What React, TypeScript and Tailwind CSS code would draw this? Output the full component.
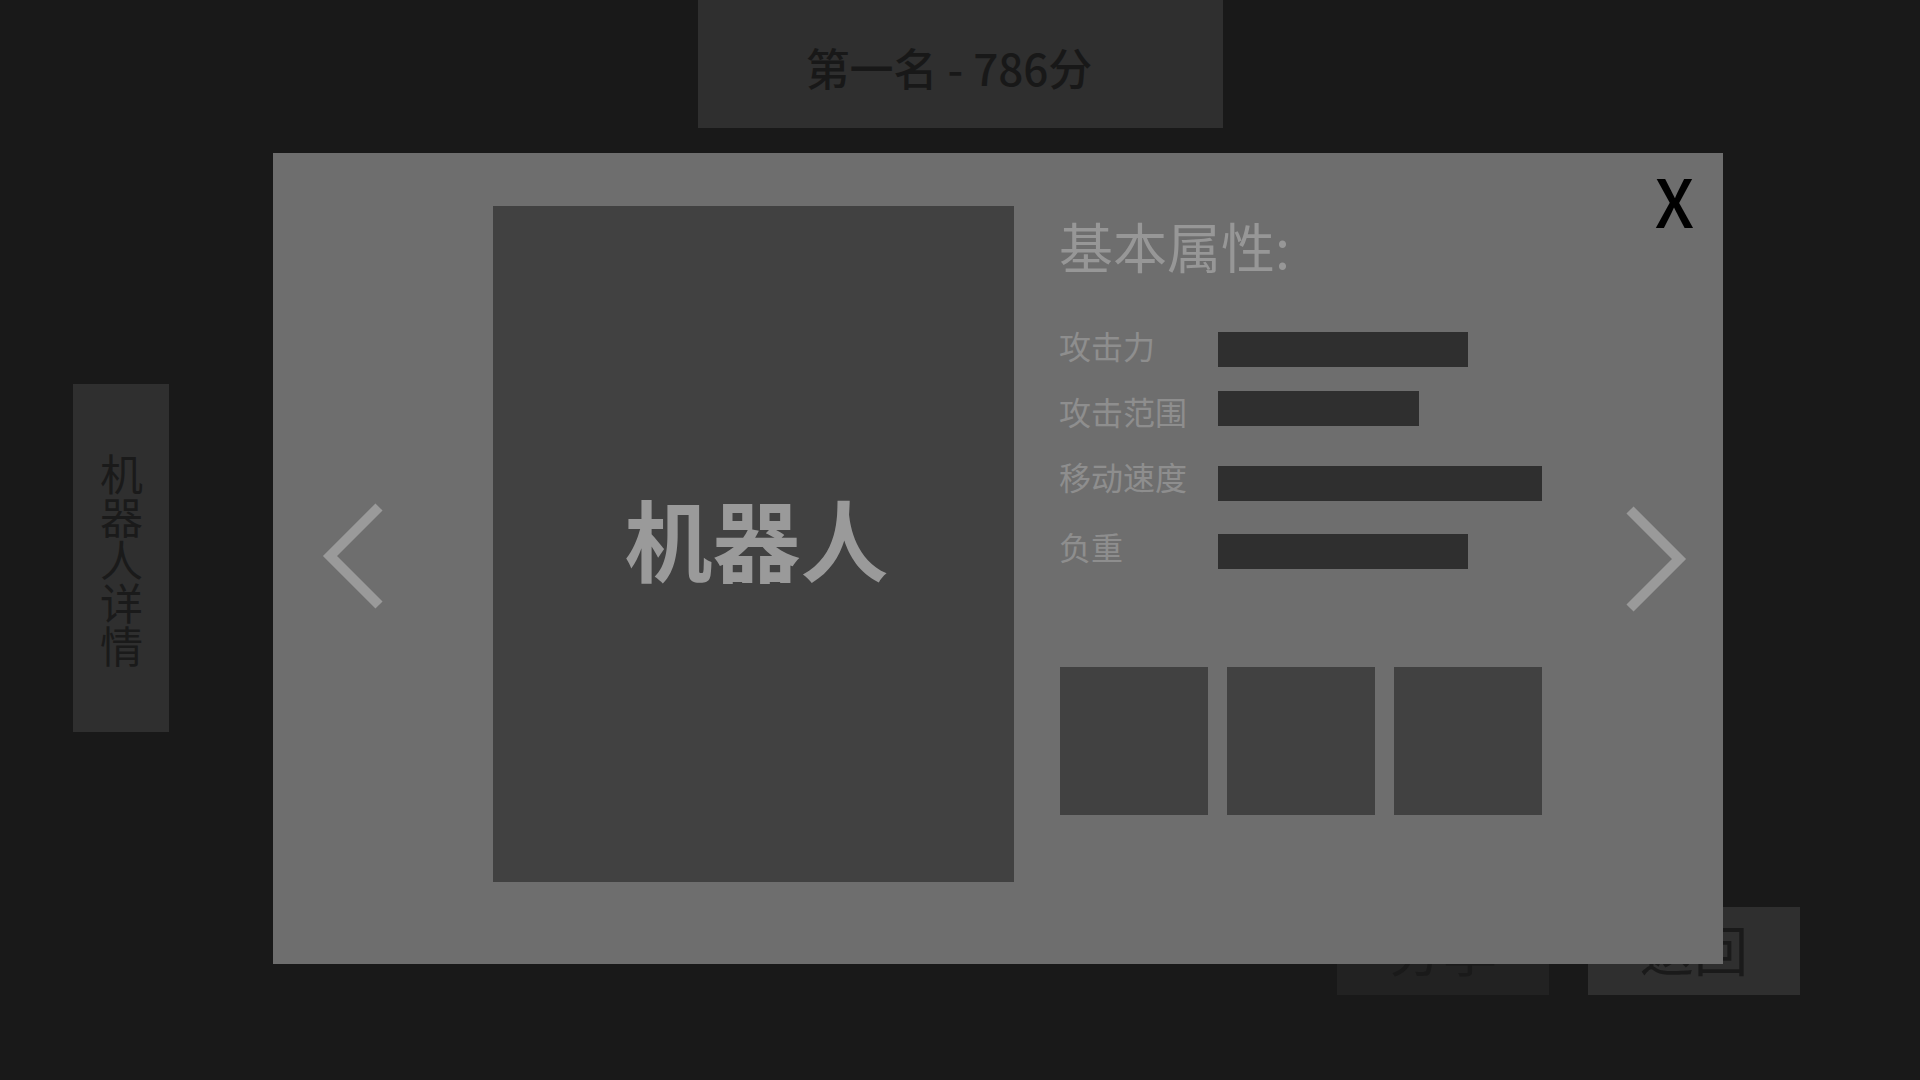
import React from 'react';

const stats = [
  { label: '攻击力', bar: 'w-[250px]', gap: 'mt-[56px]', shift: '-translate-y-[5px]' },
  { label: '攻击范围', bar: 'w-[201px]', gap: 'mt-[24px]', shift: 'translate-y-[2px]' },
  { label: '移动速度', bar: 'w-[324px]', gap: 'mt-[40px]', shift: '-translate-y-[8px]' },
  { label: '负重', bar: 'w-[250px]', gap: 'mt-[33px]', shift: '-translate-y-[6px]' },
];

export default function App() {
  return (
    <div className="relative w-[1920px] h-[1080px] overflow-hidden bg-[#191919] font-['Noto_Sans_CJK_SC','Noto_Sans',sans-serif]">
      {/* Rank banner */}
      <div className="mx-auto w-[525px] h-[128px] bg-[#2f2f2f] flex items-center justify-center pt-[6px] pr-[22px] text-[44px] leading-none font-medium text-[#181818]">
        第一名 - 786分
      </div>

      {/* Side tab */}
      <div className="ml-[73px] mt-[256px] w-[96px] h-[348px] bg-[#2f2f2f] flex items-center justify-center pt-[4px]">
        <span className="[writing-mode:vertical-rl] text-[43px] leading-none text-[#1a1a1a]">机器人详情</span>
      </div>

      {/* Bottom buttons */}
      <div className="mt-[175px] flex justify-end gap-[39px] pr-[120px]">
        <button className="w-[212px] h-[88px] bg-[#222222] text-[54px] leading-none text-[#1a1a1a] pb-[4px]">分享</button>
        <button className="w-[212px] h-[88px] bg-[#2f2f2f] text-[54px] leading-none text-[#1a1a1a] pb-[4px]">返回</button>
      </div>

      {/* Robot detail modal */}
      <div className="absolute left-[273px] top-[153px] w-[1450px] h-[811px] bg-[#6e6e6e] flex">
        <button className="w-[220px] h-full flex items-center pl-[48px] pb-[5px]">
          <svg width="62" height="106" viewBox="0 0 62 106" fill="none">
            <path d="M58 4 L9 53 L58 102" stroke="#9a9a9a" strokeWidth="10" strokeLinejoin="miter" />
          </svg>
        </button>

        <div className="mt-[53px] w-[521px] h-[676px] bg-[#414141] flex items-center justify-center">
          <span className="text-[88px] leading-none font-bold text-[#9a9a9a] pl-[6px] pb-[14px]">机器人</span>
        </div>

        <div className="ml-[45px] pt-[69px] flex flex-col">
          <h2 className="text-[54px] leading-none h-[54px] text-[#979797] -translate-y-[3px]">基本属性:</h2>

          {stats.map((s) => (
            <div key={s.label} className={`${s.gap} flex items-center h-[35px]`}>
              <span className={`w-[159px] text-[32px] leading-none text-[#8e8e8e] ${s.shift}`}>{s.label}</span>
              <div className={`${s.bar} h-[35px] bg-[#2f2f2f]`}></div>
            </div>
          ))}

          <div className="mt-[98px] flex gap-[19px] pl-px">
            <div className="w-[148px] h-[148px] bg-[#414141]"></div>
            <div className="w-[148px] h-[148px] bg-[#414141]"></div>
            <div className="w-[148px] h-[148px] bg-[#414141]"></div>
          </div>
        </div>

        <button className="ml-auto h-full flex items-center pr-[35px]">
          <svg width="62" height="106" viewBox="0 0 62 106" fill="none">
            <path d="M4 4 L53 53 L4 102" stroke="#9a9a9a" strokeWidth="10" strokeLinejoin="miter" />
          </svg>
        </button>

        <button className="absolute right-[29px] top-[13px] text-[66px] leading-none font-medium text-black">X</button>
      </div>
    </div>
  );
}
